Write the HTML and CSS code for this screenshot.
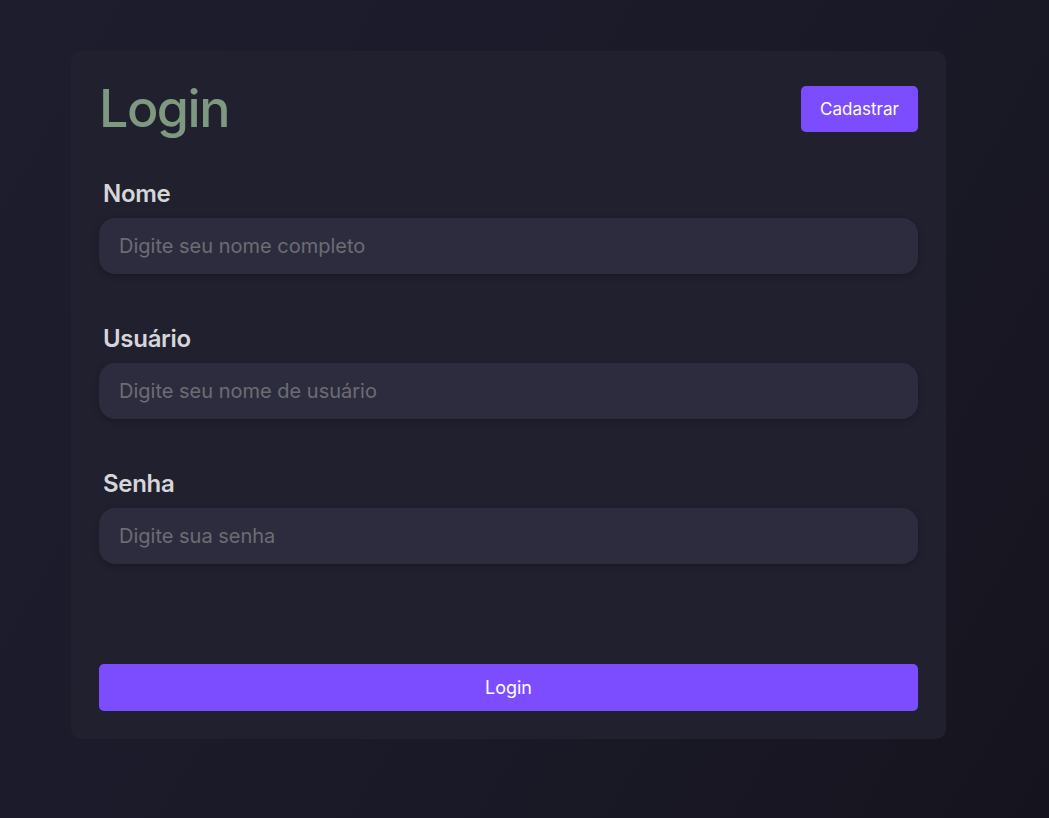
FILE: index.html
```html
<!DOCTYPE html>
<html lang="pt-BR">
<head>
<meta charset="utf-8">
<title>Login</title>
<link rel="stylesheet" href="styles.css">
</head>
<body>
<main class="page">
  <form class="card">
    <div class="card-header">
      <h1 class="title">Login</h1>
      <button type="button" class="btn btn-small">Cadastrar</button>
    </div>
    <div class="field">
      <label class="label" for="nome">Nome</label>
      <input class="input" id="nome" type="text" placeholder="Digite seu nome completo">
    </div>
    <div class="field">
      <label class="label" for="usuario">Usuário</label>
      <input class="input" id="usuario" type="text" placeholder="Digite seu nome de usuário">
    </div>
    <div class="field">
      <label class="label" for="senha">Senha</label>
      <input class="input" id="senha" type="password" placeholder="Digite sua senha">
    </div>
    <button type="submit" class="btn btn-block">Login</button>
  </form>
</main>
</body>
</html>
```
FILE: styles.css
```css
* { box-sizing: border-box; }
html, body { height: 100%; }
body {
  margin: 0;
  font-family: Inter, "Noto Sans", sans-serif;
  background: linear-gradient(120deg, #1e1d2e 0%, #1b1a29 50%, #15141e 100%);
  color: #d6d6da;
}
.page {
  padding: 51px 103px 0 71px;
}
.card {
  width: 875px;
  background: #21202f;
  border-radius: 10px;
  padding: 28px;
}
.card-header {
  display: flex;
  justify-content: space-between;
  align-items: center;
  height: 60px;
}
.title {
  margin: 0;
  font-size: 52px;
  line-height: 60px;
  font-weight: 500;
  color: #7f9880;
  letter-spacing: -1.5px;
}
.btn {
  font-family: Inter, "Noto Sans", sans-serif;
  border: none;
  background: #7c4dff;
  color: #fff;
  border-radius: 5px;
  cursor: pointer;
}
.btn-small {
  width: 117px;
  height: 46px;
  font-size: 17px;
}
.field {
  display: flex;
  flex-direction: column;
  margin-top: 40px;
}
.field + .field { margin-top: 50px; }
.label {
  font-size: 24px;
  line-height: 29px;
  font-weight: 600;
  color: #d6d6da;
  padding-left: 4px;
  margin-bottom: 10px;
  letter-spacing: -0.3px;
}
.input {
  height: 56px;
  border: none;
  border-radius: 16px;
  background: #2d2c3f;
  padding: 0 20px;
  font-family: Inter, "Noto Sans", sans-serif;
  font-size: 20px;
  color: #d6d6da;
  box-shadow: 0 2px 6px rgba(0, 0, 0, 0.25);
  outline: none;
}
.input::placeholder { color: #6c6c73; }
.btn-block {
  display: block;
  width: 100%;
  height: 47px;
  margin-top: 100px;
  font-size: 18px;
}
```
